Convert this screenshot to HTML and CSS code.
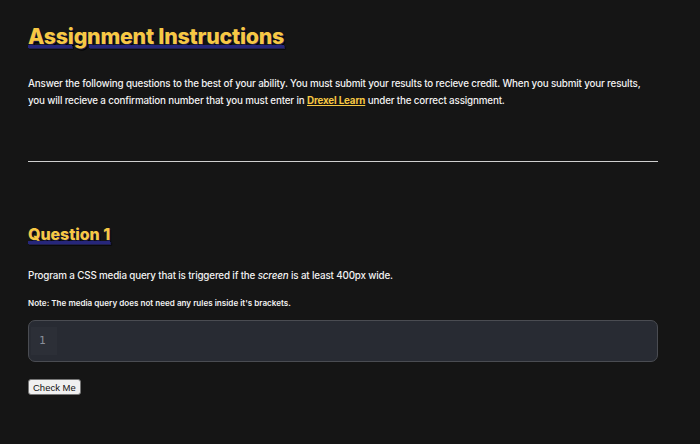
FILE: index.html
```html
<!DOCTYPE html>
<html lang="en">
<head>
<meta charset="utf-8">
<title>Assignment Instructions</title>
<link rel="stylesheet" href="styles.css">
</head>
<body>
<main class="page">
  <h1 class="title">Assignment Instructions</h1>
  <p class="intro">Answer the following questions to the best of your ability. You must submit your results to recieve credit. When you submit your results, you will recieve a confirmation number that you must enter in <a class="link" href="#">Drexel Learn</a> under the correct assignment.</p>
  <hr class="rule">
  <section class="question">
    <h2 class="q-title">Question 1</h2>
    <p class="prompt">Program a CSS media query that is triggered if the <em>screen</em> is at least 400px wide.</p>
    <p class="note">Note: The media query does not need any rules inside it's brackets.</p>
    <div class="editor">
      <div class="gutter">1</div>
      <div class="code"></div>
    </div>
    <button class="check" type="button">Check Me</button>
  </section>
</main>
</body>
</html>
```
FILE: styles.css
```css
html, body {
  margin: 0;
  padding: 0;
  background: #151515;
}
body {
  font-family: Inter, "Liberation Sans", sans-serif;
  color: #f2f2f2;
}
.page {
  width: 630px;
  margin-left: 28px;
  padding-top: 22px;
}
.title {
  margin: 0;
  font-size: 21.3px;
  font-weight: 800;
  color: #f7c843;
  line-height: 28px;
  letter-spacing: -0.2px;
  text-shadow: 1px 1px 0 #1f1f4a, 1.5px 1.5px 0 #000;
  text-decoration: underline;
  text-decoration-color: #26267a;
  text-decoration-thickness: 3px;
  text-underline-offset: 1px;
}
.intro {
  margin: 25px 0 0;
  font-size: 9.8px;
  line-height: 17px;
  font-weight: 500;
  letter-spacing: -0.15px;
}
.link {
  color: #f7c843;
  font-weight: 700;
  text-decoration: underline;
}
.rule {
  margin: 52px 0 0;
  border: 0;
  border-top: 1px solid #cfcfcf;
  height: 0;
}
.question {
  padding-top: 62px;
}
.q-title {
  margin: 0;
  font-size: 15.9px;
  font-weight: 800;
  line-height: 22px;
  color: #f7c843;
  text-shadow: 1px 1px 0 #1f1f4a, 1.5px 1.5px 0 #000;
  text-decoration: underline;
  text-decoration-color: #26267a;
  text-decoration-thickness: 3px;
  text-underline-offset: 1px;
}
.prompt {
  margin: 23px 0 0;
  font-size: 9.8px;
  line-height: 14px;
  font-weight: 500;
  letter-spacing: -0.15px;
}
.note {
  margin: 14px 0 0;
  font-size: 8.1px;
  line-height: 12px;
  font-weight: 600;
}
.editor {
  margin-top: 11px;
  height: 40px;
  display: flex;
  background: #282b33;
  border: 1px solid #4a4c52;
  border-radius: 7px;
  overflow: hidden;
}
.gutter {
  width: 26px;
  margin: 6px 0 6px 2px;
  background: #2c2f37;
  color: #8a8f9a;
  font-family: "DejaVu Sans Mono", monospace;
  font-size: 11px;
  line-height: 28px;
  padding-left: 8px;
  box-sizing: border-box;
}
.code {
  flex: 1;
}
.check {
  display: block;
  margin-top: 17px;
  font-family: "Liberation Sans", Arial, sans-serif;
  font-size: 9.5px;
  padding: 1px 4px;
  height: 16px;
  background: #f0f0f0;
  color: #111;
  border: 1px solid #767676;
  border-radius: 3px;
}
```
